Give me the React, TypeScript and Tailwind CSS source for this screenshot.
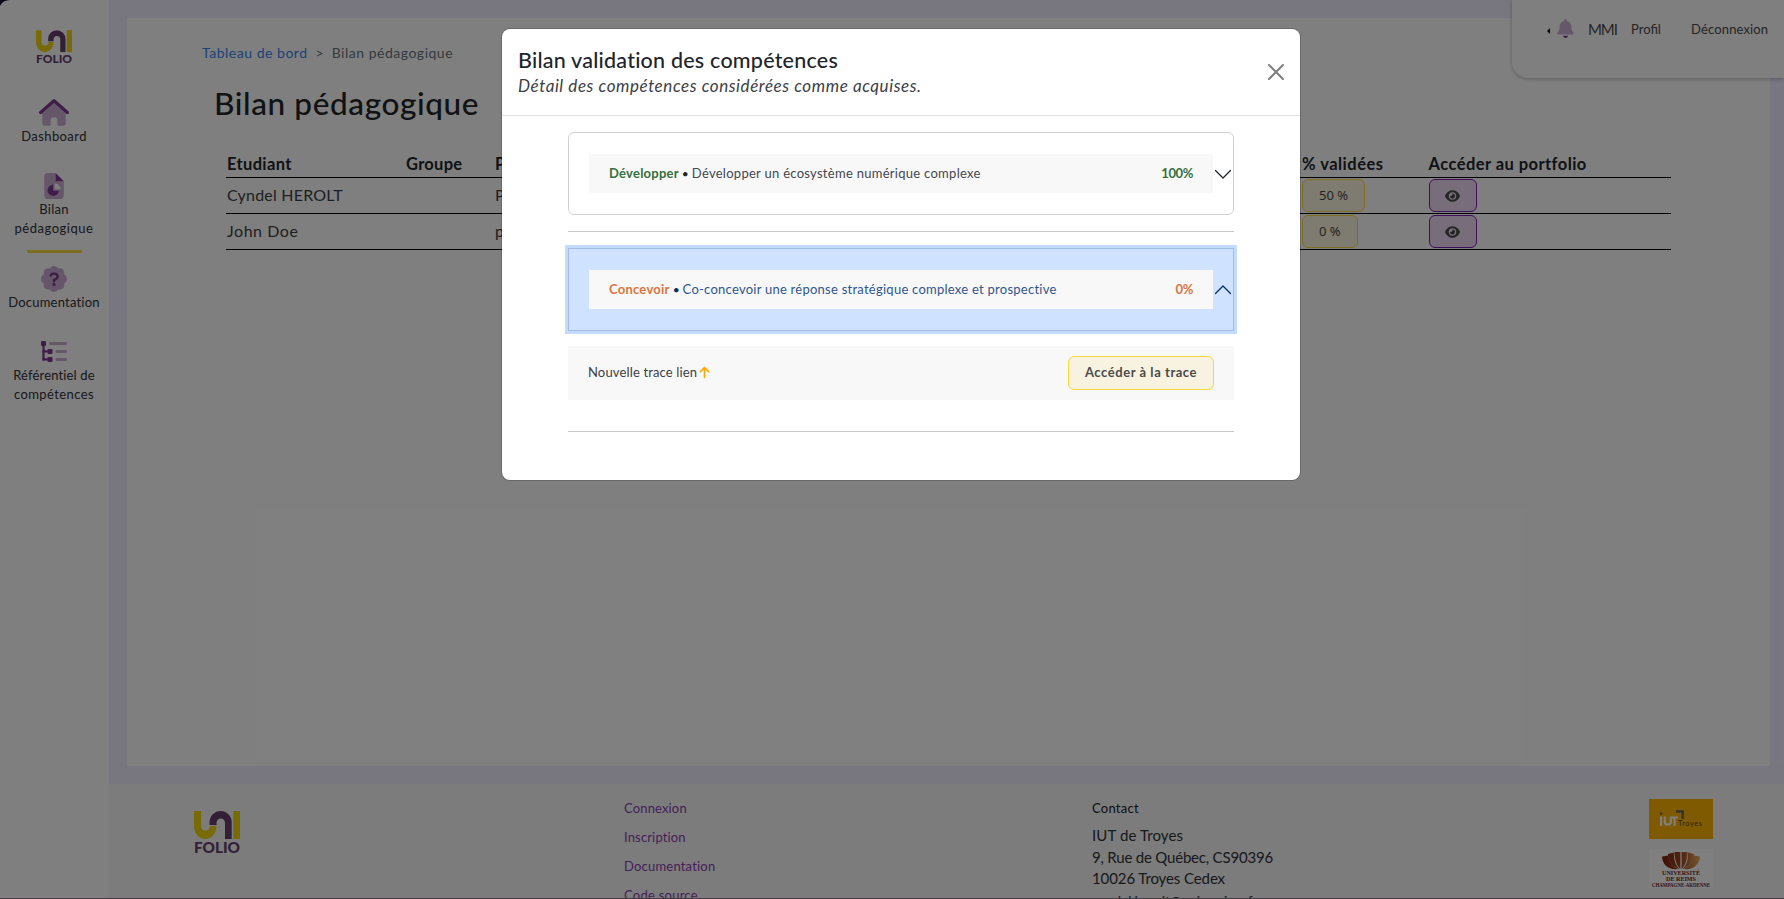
import React, { type ReactNode } from "react";
import { FaArrowUp, FaEye } from "react-icons/fa6";

function Logo({ className }: { className: string }) {
  return (
    <svg viewBox="0 0 46 43" className={`overflow-visible ${className}`}>
      <path d="M0 0h7v15a4.500 4.500 0 0 0 9 0h6.500a11.200 13 0 0 1-22.500 0z" fill="#f2d410" />
      <path d="M15.500 14v-2.500a11.100 11.500 0 0 1 22.200 0V28h-6.700V12a4.200 4.500 0 0 0-8.500 0v2z" fill="#66406e" />
      <rect x="39.300" width="6.700" height="28" fill="#f2d410" />
      <text x="0" y="42" textLength="46" lengthAdjust="spacingAndGlyphs" fontFamily="Lato, sans-serif" fontWeight="900" fontSize="15" fill="#66406e">
        FOLIO
      </text>
    </svg>
  );
}

function HouseIcon() {
  return (
    <svg viewBox="0 0 576 512" className="h-[27px] w-[30px]" fill="#7d3a90">
      <path opacity=".4" d="M64 270v192c0 28 22 50 50 50h78c18 0 32-14 32-32V384c0-18 14-32 32-32h64c18 0 32 14 32 32v96c0 18 14 32 32 32h78c28 0 50-22 50-50V270L288 74z" />
      <path d="M267 8c12-11 30-11 42 0l256 224c14 12 15 32 4 45s-32 14-45 3L288 74 52 280c-14 11-34 10-45-3s-10-33 4-45z" />
    </svg>
  );
}

function FilePieIcon() {
  return (
    <svg viewBox="0 0 384 512" className="h-[26px] w-[20px]" fill="#7d3a90">
      <path opacity=".4" d="M0 64C0 29 29 0 64 0h160v128c0 18 14 32 32 32h128v288c0 35-29 64-64 64H64c-35 0-64-29-64-64zm208 144v112h112c0-62-50-112-112-112z" />
      <path d="M224 0l160 160H224zM176 224c-61 8-112 56-112 116 0 64 52 108 112 108 58 0 104-42 112-100H176z" />
      <path fill="#fff" opacity=".35" d="M200 208v112h108c0-58-46-108-108-112z" />
    </svg>
  );
}

function BadgeQuestionIcon() {
  return (
    <svg viewBox="0 0 512 512" className="h-[26px] w-[26px]" fill="#7d3a90">
      <path opacity=".4" d="M256 0c36 0 68 21 83 52 33-12 70-4 96 21s33 63 21 96c31 15 56 51 56 87s-21 68-56 87c12 33 4 70-21 96s-63 33-96 21c-15 31-47 52-83 52s-68-21-83-52c-33 12-70 4-96-21s-33-63-21-96C21 324 0 292 0 256s21-68 56-87c-12-33-4-70 21-96s63-33 96-21c15-31 47-52 83-52z" />
      <path d="M168 184c6-34 34-56 70-56h38c42 0 76 34 76 76 0 28-15 53-39 67l-33 19v8a24 24 0 0 1-48 0v-22c0-9 5-17 12-21l45-26c9-5 15-15 15-25 0-16-12-28-28-28h-38c-12 0-20 8-23 18-4 14-12 20-26 18-14-3-24-12-21-28z" />
      <circle cx="256" cy="364" r="32" />
    </svg>
  );
}

function TreeIcon() {
  return (
    <svg viewBox="0 0 26 21" className="h-[21px] w-[26px]" fill="#7d3a90">
      <rect width="5" height="5" rx="1" />
      <rect x="1.400" y="3" width="2.200" height="16.500" />
      <rect x="1.400" y="9.300" width="7" height="2.200" />
      <rect x="1.400" y="17.300" width="7" height="2.200" />
      <rect x="6.500" y="8" width="5" height="5" rx="1" />
      <rect x="6.500" y="16" width="5" height="5" rx="1" />
      <g opacity=".4">
        <rect x="8" y="1" width="18" height="3" rx="1.500" />
        <rect x="14.500" y="9" width="11.500" height="3" rx="1.500" />
        <rect x="14.500" y="17" width="11.500" height="3" rx="1.500" />
      </g>
    </svg>
  );
}

function BellIcon() {
  return (
    <svg viewBox="0 0 448 512" className="h-[19px] w-[17px]" fill="#7d3a90">
      <path opacity=".4" d="M224 0c-18 0-32 14-32 32v19C119 66 64 131 64 208v19c0 47-17 92-48 127l-8 9c-8 9-10 22-5 33s17 20 29 20h384c12 0 24-8 29-20s3-24-5-33l-8-9c-31-35-48-80-48-127v-19c0-77-55-142-128-157V32c0-18-14-32-32-32z" />
      <path d="M288 448c0 17-7 33-19 45s-28 19-45 19-33-7-45-19-19-28-19-45z" />
    </svg>
  );
}

function NavItem({ icon, children, className }: { icon: ReactNode; children: ReactNode; className: string }) {
  return (
    <a className={`flex flex-col items-center gap-px ${className}`}>
      <span className="flex h-[27px] items-center">{icon}</span>
      <span className="text-center text-[13px] leading-[19px] text-[#303236]">{children}</span>
    </a>
  );
}

function Sidebar() {
  return (
    <aside className="flex w-[109px] shrink-0 flex-col items-center bg-[#fefefe] pt-[30px] pr-px">
      <Logo className="h-[34px] w-[36px]" />
      <NavItem icon={<HouseIcon />} className="mt-[35px]">
        <span className="tracking-[0.42px]">Dashboard</span>
      </NavItem>
      <NavItem icon={<FilePieIcon />} className="mt-[26px]">
        <span className="tracking-[0.3px]">Bilan</span>
        <br />
        <span className="tracking-[0.53px]">pédagogique</span>
      </NavItem>
      <div className="mt-3 h-[3px] w-[55px] shrink-0 bg-[#fddc41]" />
      <NavItem icon={<BadgeQuestionIcon />} className="mt-3">
        <span className="tracking-[0.2px]">Documentation</span>
      </NavItem>
      <NavItem icon={<TreeIcon />} className="mt-[26px]">
        <span className="tracking-[0.15px]">Référentiel de</span>
        <br />
        <span className="tracking-[0.4px]">compétences</span>
      </NavItem>
    </aside>
  );
}

const rowGrid = "grid grid-cols-[179px_89px_807px_126.500px_1fr] items-center border-b border-black pl-px";

function StudentRow({ name, parcours, rate }: { name: ReactNode; parcours: string; rate: string }) {
  return (
    <div className={`${rowGrid} h-9 text-[16px] text-[#3c3f44]`}>
      {name}
      <span />
      <span className="-mt-[2px]">{parcours}</span>
      <span className="flex">
        <button className="h-[33px] rounded-md border border-[#fddc41] bg-[#fcf8e0] px-4 font-['Noto_Sans','Lato',sans-serif] text-[13px] text-[#4a4a4a]">{rate}</button>
      </span>
      <button className="flex h-[33px] w-12 items-center justify-center rounded-md border border-[#7e1fb4] bg-[#f0dcf6] text-[#4a4a4a]">
        <FaEye className="h-[14px] w-[15px]" />
      </button>
    </div>
  );
}

function TopMenu() {
  return (
    <div className="absolute top-0 right-0 flex h-[78px] w-[272px] rounded-bl-2xl bg-white pt-[19px] pl-[35px] text-[13px] leading-5 text-[#4a4a4a] shadow-[0_1px_4px_rgba(0,0,0,0.25)]">
      <svg viewBox="0 0 3 6" className="mt-[9px] h-[6px] w-[3px]">
        <path d="M3 0v6L0 3z" fill="#111" />
      </svg>
      <span className="ml-[7px]">
        <BellIcon />
      </span>
      <span className="ml-[14px] w-[43px] text-[15px] leading-[21px] tracking-[-1.100px]">MMI</span>
      <span className="w-[60px]">Profil</span>
      <span className="tracking-[0.15px]">Déconnexion</span>
    </div>
  );
}

function IutLogo() {
  return (
    <svg viewBox="0 0 64 40" className="h-10 w-16">
      <rect width="64" height="40" fill="#ffb400" />
      <rect x="11" y="13.500" width="2.200" height="2.200" fill="#666" />
      <rect x="11" y="17.500" width="2.200" height="9.500" fill="#fff" />
      <path d="M15.800 17.500v5.200a3 3 0 0 0 6 0v-5.200M20.800 18.500h8M25.600 18.500v8.500" fill="none" stroke="#fff" strokeWidth="2.200" />
      <path d="M27 12.500h6.700V20" fill="none" stroke="#666" strokeWidth="2.500" />
      <text x="29" y="27" textLength="24" fontFamily="Lato, sans-serif" fontSize="7.500" fill="#5c4a20">
        Troyes
      </text>
    </svg>
  );
}

function UniversityLogo() {
  return (
    <svg viewBox="0 0 64 39" className="h-[39px] w-16">
      <defs>
        <linearGradient id="lotus" gradientUnits="userSpaceOnUse" x1="13" y1="0" x2="51" y2="0">
          <stop offset="0" stopColor="#802010" />
          <stop offset=".5" stopColor="#9c4a20" />
          <stop offset="1" stopColor="#e8b060" />
        </linearGradient>
      </defs>
      <rect width="64" height="39" fill="#fff" />
      <g fill="url(#lotus)">
        <path d="M13 7.500l6.500-1c0 6 4 11 10 13.500-10 1-16-4-16.500-12.500z" />
        <path d="M19 5l6-1.500c-.5 7 1.500 13 5.500 16.500-7-2-11.500-8-11.500-15z" />
        <path d="M25.500 3h5.900v17c-4-4-5.900-10-5.900-17z" />
        <path d="M32.600 3h5.900c0 7-1.900 13-5.900 17z" />
        <path d="M45 5l-6-1.500c.5 7-1.500 13-5.500 16.500 7-2 11.500-8 11.500-15z" />
        <path d="M51 7.500l-6.500-1c0 6-4 11-10 13.500 10 1 16-4 16.500-12.500z" />
      </g>
      <g fontFamily="'Liberation Serif', serif" fontWeight="700" fill="#702818">
        <text x="13" y="26" fontSize="6" textLength="38" lengthAdjust="spacingAndGlyphs">UNIVERSITÉ</text>
        <text x="17" y="32" fontSize="6" textLength="30" lengthAdjust="spacingAndGlyphs">DE REIMS</text>
        <text x="3" y="37.500" fontSize="5.500" textLength="58" lengthAdjust="spacingAndGlyphs">CHAMPAGNE-ARDENNE</text>
      </g>
    </svg>
  );
}

function Footer() {
  return (
    <footer className="flex h-[115px] bg-[#f9f9f9]">
      <div className="w-[515px] pt-[27px] pl-[84.500px]">
        <Logo className="h-[43px] w-[46px]" />
      </div>
      <nav className="flex w-[468px] flex-col gap-[9px] pt-[14px] text-[13px] leading-5 text-[#8a3fb0]">
        <a className="tracking-[0.15px]">Connexion</a>
        <a className="tracking-[0.15px]">Inscription</a>
        <a className="tracking-[0.2px]">Documentation</a>
        <a className="tracking-[0.25px]">Code source</a>
      </nav>
      <div className="w-[557px] pt-[14px] text-[15px] leading-[21.500px] text-[#303236]">
        <h2 className="mb-[7px] text-[13px] leading-5 tracking-[0.25px] text-[#181a1c]">Contact</h2>
        <p className="tracking-[0.1px]">IUT de Troyes</p>
        <p className="tracking-[-0.2px]">9, Rue de Québec, CS90396</p>
        <p className="tracking-[-0.1px]">10026 Troyes Cedex</p>
        <p className="text-[14px] tracking-[-0.15px]">cyndel.herolt@univ-reims.fr</p>
      </div>
      <div className="flex flex-col gap-[10px] pt-[15px]">
        <IutLogo />
        <UniversityLogo />
      </div>
    </footer>
  );
}

function CompetenceHeader({ open, name, nameClass, label, labelClass, rate }: { open: boolean; name: string; nameClass: string; label: string; labelClass: string; rate: string }) {
  const frame = open
    ? "bg-[#cfe2ff] text-[#2f5590] border-[#a3bce6] shadow-[0_0_0_3px_#c2dbfe]"
    : "bg-white text-[#43474e] border-[#d0d0d0] rounded-md";
  return (
    <div className={`flex h-[83px] items-center border pl-5 ${frame}`}>
      <div className="flex h-[39px] w-[624px] items-center bg-[#f8f8f8] px-5 text-[13px]">
        <span className={`font-bold tracking-[0.24px] ${nameClass}`}>{name}</span>
        <span className={`mx-[3px] text-[12px] ${open ? "text-[#052c65]" : "text-[#212529]"}`}>•</span>
        <span className={labelClass}>{label}</span>
        <span className={`ml-auto font-bold tracking-[-0.4px] ${nameClass}`}>{rate}</span>
      </div>
      <svg viewBox="0 0 16 16" className={`ml-[2px] h-4 w-4 ${open ? "rotate-180" : ""}`}>
        <path d="M.5 4.500L8 12l7.500-7.500" fill="none" stroke={open ? "#052c65" : "#212529"} strokeWidth="1.300" strokeLinecap="round" strokeLinejoin="round" />
      </svg>
    </div>
  );
}

function Modal() {
  return (
    <div className="absolute top-[29px] left-[502px] h-[451px] w-[798px] rounded-lg bg-white shadow-[0_0_0_1px_rgba(0,0,0,0.18)]">
      <header className="flex h-[87px] items-center justify-between border-b border-[#dee2e6] pr-4 pl-4">
        <div className="text-[#212529]">
          <h2 className="text-[21.500px] leading-[30px] font-medium tracking-[0.22px]">Bilan validation des compétences</h2>
          <p className="-mt-px mb-px text-[17px] leading-6 text-[#3c4045] italic tracking-[0.57px]">Détail des compétences considérées comme acquises.</p>
        </div>
        <svg viewBox="0 0 16 16" className="h-4 w-4">
          <path d="M1 1l14 14M15 1L1 15" stroke="#7f7f7f" strokeWidth="2" strokeLinecap="round" />
        </svg>
      </header>
      <div className="px-[66px] pt-4">
        <CompetenceHeader open={false} name="Développer" nameClass="text-[#36703c]" label="Développer un écosystème numérique complexe" labelClass="tracking-[0.28px]" rate="100%" />
        <hr className="mt-4 mb-4 border-[#c8c8c8]" />
        <CompetenceHeader open name="Concevoir" nameClass="text-[#d97441]" label="Co-concevoir une réponse stratégique complexe et prospective" labelClass="tracking-[0.25px]" rate="0%" />
        <div className="mt-[15px] flex h-[54px] items-center bg-[#f8f8f8] px-5 text-[13px] text-[#3c4045]">
          <span className="tracking-[0.15px]">Nouvelle trace lien</span>
          <FaArrowUp className="mb-px ml-[2px] h-[13px] w-[11px] text-[#ffa500]" />
          <button className="ml-auto h-[34px] w-[146px] rounded-md border border-[#fad73c] bg-[#f7f3e0] font-bold tracking-[0.55px] text-[#4a4a4a]">Accéder à la trace</button>
        </div>
        <hr className="mt-[31px] border-[#c8c8c8]" />
      </div>
    </div>
  );
}

export default function App() {
  return (
    <div className="relative flex h-[899px] w-[1784px] overflow-hidden bg-white font-['Lato',sans-serif]">
      <Sidebar />
      <div className="flex flex-1 flex-col bg-[#f1edff]">
        <main className="mt-[18px] mr-[14px] mb-[18px] ml-[18px] h-[748px] bg-white">
          <div className="flex pt-[25px] pl-[75px] text-[14px] leading-5">
            <span className="tracking-[0.52px] text-[#3a84ee]">Tableau de bord</span>
            <span className="mx-2 text-[#6c757d]">&gt;</span>
            <span className="tracking-[0.51px] text-[#6c757d]">Bilan pédagogique</span>
          </div>
          <h1 className="mt-[18px] pl-[87px] text-[31.500px] leading-[44px] font-medium tracking-[0.62px] text-[#212529]">Bilan pédagogique</h1>
          <div className="mt-[27px] ml-[99px] w-[1445px]">
            <div className={`${rowGrid} h-[26px] pb-[2px] text-[16.500px] font-bold text-[#212529]`}>
              <span className="tracking-[0.35px]">Etudiant</span>
              <span className="tracking-[0.28px]">Groupe</span>
              <span className="tracking-[0.3px]">Parcours</span>
              <span className="tracking-[0.5px]">% validées</span>
              <span className="tracking-[0.44px]">Accéder au portfolio</span>
            </div>
            <StudentRow name={<span className="-mt-[2px] tracking-[0.2px]">Cyndel HEROLT</span>} parcours="Parcours 1" rate="50 %" />
            <StudentRow name={<span className="-mt-[2px] tracking-[0.55px]">John Doe</span>} parcours="parcours 2" rate="0 %" />
          </div>
        </main>
        <Footer />
      </div>
      <TopMenu />
      <svg viewBox="0 0 12 6" className="absolute top-0 left-0 h-[6px] w-[12px]">
        <path d="M0 0h12C6 0 2 1.500 0 6z" fill="#10102a" />
      </svg>
      <div className="absolute inset-0 bg-black/50" />
      <div className="absolute bottom-0 left-0 h-px w-full bg-[#433c42]" />
      <Modal />
    </div>
  );
}
